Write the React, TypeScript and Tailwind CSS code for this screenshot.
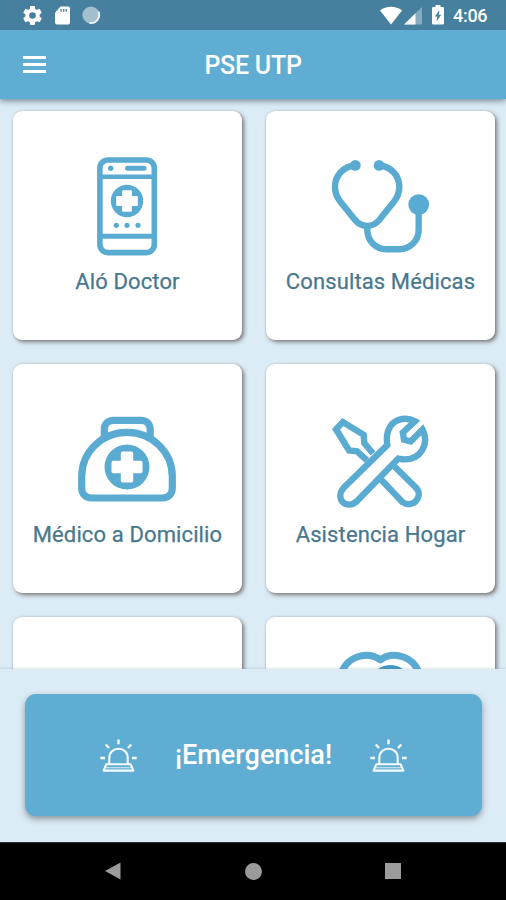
import type { ReactNode } from "react";

const BLUE = "#5aabd2";

function Icon({ children }: { children: ReactNode }) {
  return (
    <svg
      className="size-[100px] shrink-0 overflow-visible"
      viewBox="0.5 0 100 100"
      fill="none"
      stroke={BLUE}
      strokeWidth="6.4"
      strokeLinejoin="round"
    >
      {children}
    </svg>
  );
}

function PhoneIcon() {
  return (
    <Icon>
      <rect x="22.4" y="4" width="54.4" height="92.6" rx="8" strokeWidth="5.6" />
      <path d="M22 20.7H77" strokeWidth="4.6" />
      <path d="M22 80.3H77" strokeWidth="5" />
      <path d="M50 12.3H66.5" strokeWidth="5" strokeLinecap="round" />
      <g fill={BLUE} stroke="none">
        <circle cx="33.2" cy="12.3" r="2.7" />
        <circle cx="49.5" cy="45" r="16.2" />
        <circle cx="38.8" cy="69.3" r="2.6" />
        <circle cx="49.5" cy="69.3" r="2.6" />
        <circle cx="60.5" cy="69.3" r="2.6" />
      </g>
      <g fill="white" stroke="none">
        <rect x="44.6" y="34.2" width="9.8" height="21.6" rx="1.2" />
        <rect x="38.7" y="40.1" width="21.6" height="9.8" rx="1.2" />
      </g>
    </Icon>
  );
}

function StethoscopeIcon() {
  return (
    <Icon>
      <path d="M24.5 9.3C13 10.5 4.5 19.5 4.5 31C4.5 37 6.2 41 9.5 45.2L25 64.5C31.5 71.6 42 71.6 48.3 64.5L63.8 45.2C67.1 41 68.8 37 68.8 31C68.8 19.5 60.3 10.5 48.8 9.3" />
      <path d="M36.8 69V74C36.8 84.5 45 93.2 55.5 93.2H69C79.6 93.2 88.2 84.6 88.2 74V49" />
      <g fill={BLUE} stroke="none">
        <circle cx="24.8" cy="9.4" r="5.4" />
        <circle cx="48.6" cy="9.4" r="5.4" />
        <circle cx="88.2" cy="48.6" r="10.4" />
      </g>
    </Icon>
  );
}

function MedicalBagIcon() {
  return (
    <Icon>
      <path
        d="M4.2 67.5C4.2 43 24.5 23.3 49.5 23.3S94.8 43 94.8 67.5V79C94.8 85 90.8 89 84.8 89H14.2C8.2 89 4.2 85 4.2 79Z"
        strokeWidth="7.2"
      />
      <path d="M26.8 30V20.5C26.8 15 30.5 11.3 36 11.3H63.5C69 11.3 72.7 15 72.7 20.5V30" strokeWidth="7.2" />
      <circle cx="49.5" cy="58" r="22.5" fill={BLUE} stroke="none" />
      <g fill="white" stroke="none">
        <rect x="43.3" y="42.5" width="12.4" height="31" rx="2" />
        <rect x="34" y="51.8" width="31" height="12.4" rx="2" />
      </g>
    </Icon>
  );
}

function ToolsIcon() {
  return (
    <Icon>
      <g strokeLinejoin="miter">
        <path d="M42.5 44.5L33.8 34L33.2 25.8L12.3 13L5.5 20.3L18.6 41.5L26.6 42.3L36.5 51.3" />
        <path d="M64 57.5L85.3 78.5C93.5 87 83 100.5 71.6 92.8L50 70" />
        <path
          d="M84.5 12.2C80.5 10 76 9.3 71.5 10C61 11.8 54.5 21 56.8 36L13 79C4 90 16 101.5 26.6 92L67.8 49.6C79 52 87 48.5 91.8 41C95.5 34.5 95.7 27.5 92 20.5L80.2 32.5L73.5 30.7L72.3 23.7Z"
          fill="white"
        />
      </g>
    </Icon>
  );
}

function HeartIcon() {
  return (
    <Icon>
      <path
        d="M49.8 7.8C42 2.2 34 2.4 26.5 5C17 8.5 11.5 15 9.5 27C9.5 55 38 76 49.8 90C61.5 76 90 55 90 27C88 15 82.5 8.5 73 5C65.5 2.4 57.5 2.2 49.8 7.8Z"
        strokeWidth="7"
      />
      <circle cx="60" cy="34" r="18.5" stroke="#4298c6" strokeWidth="5" />
    </Icon>
  );
}

function SirenIcon() {
  return (
    <svg
      className="h-[33px] w-[37px] shrink-0"
      viewBox="0 0 37 33"
      fill="none"
      stroke="#f5fbfe"
      strokeWidth="2.1"
      strokeLinejoin="round"
    >
      <path d="M9.3 25V19C9.3 13.5 13.2 9.8 18.5 9.8S27.7 13.5 27.7 19V25" />
      <path d="M6.4 25.2H30.6L33.4 31.6H3.6Z" />
      <path d="M6 28.7H31" strokeWidth="1.2" strokeOpacity="0.7" />
      <path d="M18.5 .5V5.3M.3 19H5M32 19H36.7M5.7 5.5L9 9M31.3 5.5L28 9" strokeWidth="2.4" />
    </svg>
  );
}

function Card({ icon, label, raised = false }: { icon: ReactNode; label?: string; raised?: boolean }) {
  return (
    <div
      className={`flex h-[229px] flex-col items-center rounded-[9px] bg-white shadow-[2px_2px_4px_rgba(70,60,55,0.65),0_0_2px_rgba(60,90,100,0.2)] ${
        raised ? "pt-[35px]" : "pt-[45px]"
      }`}
    >
      {icon}
      {label && (
        <span className="mt-[10px] whitespace-nowrap text-[22px] leading-[32px] tracking-[0.12px] text-[#48788e] [-webkit-text-stroke:0.25px_#48788e]">
          {label}
        </span>
      )}
    </div>
  );
}

function StatusBar() {
  return (
    <div className="flex h-[30px] shrink-0 items-center bg-[#46809e] pl-[23px] pr-[19px] text-white">
      <svg className="size-[19px]" viewBox="2 2 20 20" fill="currentColor">
        <path d="M19.43 12.98c.04-.32.07-.64.07-.98s-.03-.66-.07-.98l2.11-1.65c.19-.15.24-.42.12-.64l-2-3.46c-.12-.22-.39-.3-.61-.22l-2.49 1c-.52-.4-1.08-.73-1.69-.98l-.38-2.65C14.46 2.18 14.25 2 14 2h-4c-.25 0-.46.18-.49.42l-.38 2.65c-.61.25-1.17.59-1.69.98l-2.49-1c-.23-.09-.49 0-.61.22l-2 3.46c-.13.22-.07.49.12.64l2.11 1.65c-.04.32-.07.65-.07.98s.03.66.07.98l-2.11 1.65c-.19.15-.24.42-.12.64l2 3.46c.12.22.39.3.61.22l2.49-1c.52.4 1.08.73 1.69.98l.38 2.65c.03.24.24.42.49.42h4c.25 0 .46-.18.49-.42l.38-2.65c.61-.25 1.17-.59 1.69-.98l2.49 1c.23.09.49 0 .61-.22l2-3.46c.12-.22.07-.49-.12-.64zM12 15.5A3.5 3.5 0 1 1 12 8.5A3.5 3.5 0 0 1 12 15.5Z" />
      </svg>
      <svg className="ml-[13px] h-[19px] w-[15px]" viewBox="0 0 16 20">
        <path d="M6 .5H14C15 .5 16 1.5 16 2.5V17C16 18.5 15.5 19.5 14 19.5H2C.7 19.5 0 18.5 0 17V7Z" fill="currentColor" />
        <path d="M6.5 3V6M9.3 3V6M12 3V6" stroke="#46809e" strokeWidth="1.4" />
      </svg>
      <svg className="ml-[11px] size-[20px]" viewBox="0 0 20 20">
        <circle cx="10" cy="10" r="8.6" fill="#a4c0cf" />
        <path d="M17.5 6.5A8.3 8.3 0 0 1 8.5 18" fill="none" stroke="#eff7fb" strokeWidth="1.8" />
      </svg>
      <svg className="ml-auto h-[19px] w-[22px]" viewBox="0 0 22 19">
        <path d="M0 4.5C6-.5 16-.5 22 4.5L11 18.5Z" fill="currentColor" />
      </svg>
      <svg className="ml-[2px] mt-px size-[18px]" viewBox="0 0 18 18" fill="currentColor">
        <path d="M0 17.5L18 0V17.5Z" opacity="0.35" />
        <path d="M0 17.5L11.5 6.3V17.5Z" />
      </svg>
      <svg className="ml-[10px] h-[20px] w-[12px]" viewBox="0 0 12 20">
        <path d="M3.5 0H8.5V2H10.5C11.5 2 12 2.5 12 3.5V18C12 19 11.5 19.5 10.5 19.5H1.5C.5 19.5 0 19 0 18V3.5C0 2.5 .5 2 1.5 2H3.5Z" fill="currentColor" />
        <path d="M7.5 5L2.8 11.5H5.3L4.5 16.5L9.2 9.8H6.7Z" fill="#46809e" />
      </svg>
      <span className="ml-[9px] mt-[2px] w-[34px] whitespace-nowrap text-[18px] font-medium leading-[30px] tracking-[-0.3px]">
        4:06
      </span>
    </div>
  );
}

export default function App() {
  return (
    <div className="flex h-[900px] w-[506px] flex-col overflow-hidden bg-[#dcecf6] font-[Roboto,sans-serif]">
      <header className="relative z-10 shrink-0 shadow-[0_2px_6px_rgba(50,70,90,0.6)]">
        <StatusBar />
        <div className="grid h-[69px] grid-cols-[70px_1fr_70px] items-center bg-[#60add3] text-white">
          <button aria-label="Menú" className="ml-[23px] flex w-[23px] flex-col gap-[4px]">
            <span className="h-[3px] w-full bg-white" />
            <span className="h-[3px] w-full bg-white" />
            <span className="h-[3px] w-full bg-white" />
          </button>
          <h1 className="mt-[2px] text-center text-[25px] font-medium leading-[30px] tracking-[-0.25px]">PSE UTP</h1>
        </div>
      </header>

      <main className="min-h-0 flex-1 overflow-hidden px-[13px] pt-[12px]">
        <div className="grid grid-cols-[229px_229px] gap-x-[24px] gap-y-[24px]">
          <Card icon={<PhoneIcon />} label="Aló Doctor" />
          <Card icon={<StethoscopeIcon />} label="Consultas Médicas" />
          <Card icon={<MedicalBagIcon />} label="Médico a Domicilio" />
          <Card icon={<ToolsIcon />} label="Asistencia Hogar" />
          <Card icon={null} />
          <Card icon={<HeartIcon />} raised />
        </div>
      </main>

      <section className="relative z-10 h-[173px] shrink-0 bg-[#dcecf6] pl-[25px] pr-[24px] pt-[25px] shadow-[0_-1px_2px_rgba(90,130,140,0.2)]">
        <button className="flex h-[122px] w-full items-center justify-center gap-[38px] rounded-[11px] bg-[#60add3] text-white shadow-[0_3px_6px_rgba(70,80,85,0.55)]">
          <SirenIcon />
          <span className="text-[27px] font-medium leading-[32px]">¡Emergencia!</span>
          <SirenIcon />
        </button>
      </section>

      <nav className="flex h-[58px] shrink-0 items-center justify-between border-t border-[#26343b] bg-black pb-px pl-[105px] pr-[105px]">
        <svg className="h-[18px] w-[16px]" viewBox="0 0 16 18">
          <path d="M0 9L15.5 .5V17.5Z" fill="#9b9b9b" />
        </svg>
        <span className="size-[17px] rounded-full bg-[#9b9b9b]" />
        <span className="size-[16px] bg-[#9b9b9b]" />
      </nav>
    </div>
  );
}
